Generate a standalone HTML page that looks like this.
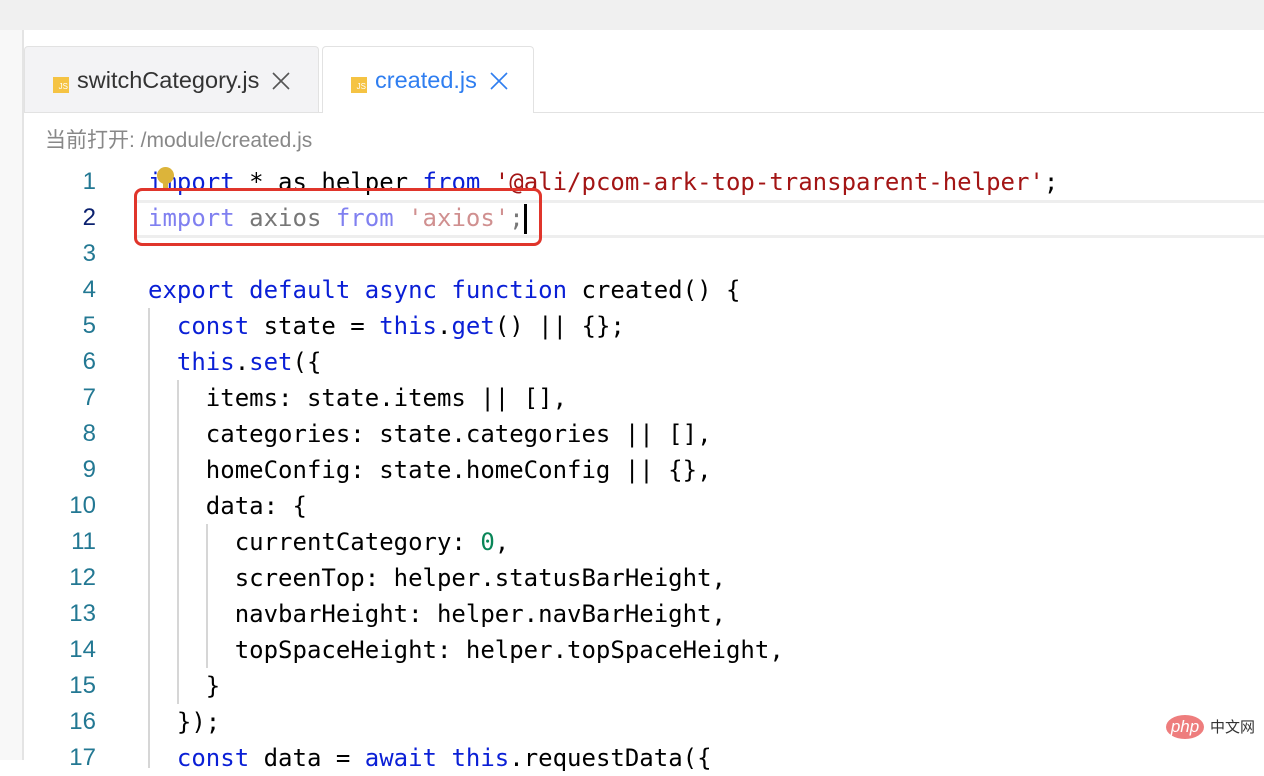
<!DOCTYPE html>
<html><head><meta charset="utf-8"><style>
body{margin:0;width:1264px;height:760px;overflow:hidden;background:#fff;position:relative;font-family:"Liberation Sans","Noto Sans CJK SC",sans-serif}
.top{position:absolute;left:0;top:0;width:1264px;height:30px;background:#f0f0f0}
.side{position:absolute;left:0;top:30px;width:22px;height:730px;background:#f8f8f8;border-right:2px solid #e4e4e4}
.tabbar{position:absolute;left:24px;top:112px;width:1240px;height:1px;background:#e2e2e2}
.tab{position:absolute;top:46px;height:66px;border:1px solid #e2e2e2;border-bottom:none;border-radius:4px 4px 0 0;font-size:23.5px;line-height:66px;box-sizing:border-box;white-space:nowrap}
.js{display:inline-block;width:16px;height:16px;background:#f5c343;color:#fff;font-size:8px;line-height:20px;text-align:right;vertical-align:-1px;margin-right:8px;box-sizing:border-box;padding-right:1px}
.x{display:inline-block;margin-left:13px;vertical-align:-2px}
.path{position:absolute;left:45px;top:124px;font-size:21px;color:#888}
.ln{position:absolute;width:96px;left:0;text-align:right;font-size:24px;color:#237893;height:36px;line-height:36px}
.cl{position:absolute;left:148px;height:36px;line-height:36px;font-family:"DejaVu Sans Mono","Liberation Mono",monospace;font-size:24px;color:#000;white-space:pre}
.k{color:#0a1fd6}.s{color:#a31515}.n{color:#098658}
.g{position:absolute;width:2px;background:#d6d6d6}
</style></head><body>
<div class="top"></div>
<div class="side"></div>
<div class="tab" style="left:24px;width:295px;background:#f3f3f5;padding-left:28px;color:#333">
<span class="js">JS</span>switchCategory.js<svg class="x" width="18" height="18" viewBox="0 0 18 18"><path d="M1 1L17 17M17 1L1 17" stroke="#555" stroke-width="1.6"/></svg></div>
<div class="tab" style="left:322px;width:212px;height:67px;background:#fff;padding-left:28px;color:#2f7ef0;z-index:2">
<span class="js">JS</span>created.js<svg class="x" width="18" height="18" viewBox="0 0 18 18"><path d="M1 1L17 17M17 1L1 17" stroke="#2f7ef0" stroke-width="1.6"/></svg></div>
<div class="tabbar"></div>
<div class="path">当前打开: /module/created.js</div>

<div style="position:absolute;left:136px;top:200px;width:1128px;height:32px;border-top:3px solid #eee;border-bottom:3px solid #eee"></div>

<div class="g" style="left:148px;top:308px;height:460px"></div>
<div class="g" style="left:177px;top:380px;height:324px"></div>
<div class="g" style="left:206px;top:524px;height:144px"></div>

<div class="ln" style="top:164px">1</div>
<div class="ln" style="top:200px;color:#0b216f">2</div>
<div class="ln" style="top:236px">3</div>
<div class="ln" style="top:272px">4</div>
<div class="ln" style="top:308px">5</div>
<div class="ln" style="top:344px">6</div>
<div class="ln" style="top:380px">7</div>
<div class="ln" style="top:416px">8</div>
<div class="ln" style="top:452px">9</div>
<div class="ln" style="top:488px">10</div>
<div class="ln" style="top:524px">11</div>
<div class="ln" style="top:560px">12</div>
<div class="ln" style="top:596px">13</div>
<div class="ln" style="top:632px">14</div>
<div class="ln" style="top:668px">15</div>
<div class="ln" style="top:704px">16</div>
<div class="ln" style="top:740px">17</div>

<div class="cl" style="top:164px"><span class="k">import</span> * as helper <span class="k">from</span> <span class="s">'@ali/pcom-ark-top-transparent-helper'</span>;</div>
<div class="cl" style="top:200px;color:#777"><span style="color:#8080f0">import</span> axios <span style="color:#8080f0">from</span> <span style="color:#d09090">'axios'</span>;<span style="display:inline-block;width:3px;height:30px;background:#000;vertical-align:middle"></span></div>
<div class="cl" style="top:272px"><span class="k">export default async function</span> created() {</div>
<div class="cl" style="top:308px">  <span class="k">const</span> state = <span class="k">this</span>.<span class="k">get</span>() || {};</div>
<div class="cl" style="top:344px">  <span class="k">this</span>.<span class="k">set</span>({</div>
<div class="cl" style="top:380px">    items: state.items || [],</div>
<div class="cl" style="top:416px">    categories: state.categories || [],</div>
<div class="cl" style="top:452px">    homeConfig: state.homeConfig || {},</div>
<div class="cl" style="top:488px">    data: {</div>
<div class="cl" style="top:524px">      currentCategory: <span class="n">0</span>,</div>
<div class="cl" style="top:560px">      screenTop: helper.statusBarHeight,</div>
<div class="cl" style="top:596px">      navbarHeight: helper.navBarHeight,</div>
<div class="cl" style="top:632px">      topSpaceHeight: helper.topSpaceHeight,</div>
<div class="cl" style="top:668px">    }</div>
<div class="cl" style="top:704px">  });</div>
<div class="cl" style="top:740px">  <span class="k">const</span> data = <span class="k">await this</span>.requestData({</div>

<div style="position:absolute;left:157px;top:167px;width:17px;height:17px;border-radius:50%;background:#dcb43a"></div>
<div style="position:absolute;left:163px;top:182px;width:5px;height:8px;background:#dcb43a"></div>
<div style="position:absolute;left:134px;top:188px;width:402px;height:52px;border:3px solid #e0352b;border-radius:8px"></div>

<div style="position:absolute;left:1166px;top:715px;width:38px;height:24px;border-radius:50%;background:#ee7d7d;color:#fff;font-style:italic;font-size:17px;line-height:23px;text-align:center">php</div>
<div style="position:absolute;left:1210px;top:716px;font-size:15px;color:#333">中文网</div>
</body></html>
